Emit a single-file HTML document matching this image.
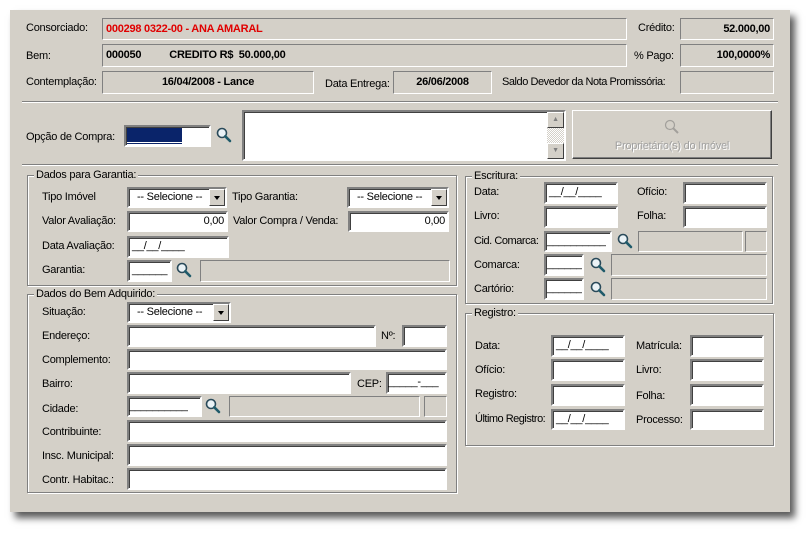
<!DOCTYPE html>
<html><head><meta charset="utf-8"><style>
*{box-sizing:border-box;margin:0;padding:0}
body{width:810px;height:534px;background:#fff;position:relative;overflow:hidden;font-family:"Liberation Sans",Arial,sans-serif;font-size:11px;color:#000;letter-spacing:-0.25px}
#p{position:absolute;left:10px;top:10px;width:780px;height:502px;background:#d4d0c8;box-shadow:5px 6px 7px rgba(0,0,0,.65)}
.a{position:absolute}
.l{position:absolute;white-space:nowrap;line-height:14px}
.ro{position:absolute;background:#d4d0c8;border:1px solid;border-color:#808080 #fff #fff #808080;font-weight:bold;line-height:19px;padding-top:1px;white-space:nowrap;overflow:hidden}
.in{position:absolute;background:#fff;border:2px solid;border-color:#808080 #fff #fff #808080;box-shadow:inset 1px 1px 0 #404040;line-height:17px;padding-left:3px;white-space:nowrap;overflow:hidden}
.sel{position:absolute;background:#fff;border:2px solid;border-color:#808080 #fff #fff #808080;box-shadow:inset 1px 1px 0 #404040;line-height:17px;padding-left:8px;white-space:nowrap}
.sel b{position:absolute;right:0;top:0;width:16px;height:17px;background:#d4d0c8;border:1px solid;border-color:#fff #404040 #404040 #fff;font-weight:normal}
.sel b:after{content:"";position:absolute;left:4px;top:6px;border:3px solid transparent;border-top:4px solid #000;border-bottom:0}
.g{position:absolute;border:1px solid #808080;box-shadow:1px 1px 0 #fff, inset 1px 1px 0 #fff}
.g span{position:absolute;left:6px;top:-8px;background:#d4d0c8;padding:0 2px;line-height:14px}
.hr{position:absolute;height:2px;border-top:1px solid #808080;border-bottom:1px solid #fff}
.m{position:absolute;width:16px;height:16px}
</style></head><body>
<div id="p"></div>
<svg width="0" height="0" style="position:absolute"><defs><g id="mg"><circle cx="6" cy="6" r="4.5" fill="#eaf2f6" stroke="#2a4a5a" stroke-width="1.6"/><path d="M9.3 9.3L14 14" stroke="#1f5a6a" stroke-width="2.6" stroke-linecap="round"/></g></defs></svg>

<div class="l" style="left:26px;top:21px">Consorciado:</div>
<div class="ro" style="left:102px;top:18px;width:525px;height:22px;color:#e00000;padding-left:3px">000298 0322-00 - ANA AMARAL</div>
<div class="l" style="left:638px;top:21px">Crédito:</div>
<div class="ro" style="left:680px;top:18px;width:94px;height:22px;text-align:right;padding-right:3px">52.000,00</div>

<div class="l" style="left:26px;top:49px">Bem:</div>
<div class="ro" style="left:102px;top:44px;width:525px;height:23px;padding-left:3px">000050 &nbsp;&nbsp;&nbsp;&nbsp;&nbsp;&nbsp;&nbsp;&nbsp;&nbsp;CREDITO R$&nbsp; 50.000,00</div>
<div class="l" style="left:634px;top:49px">% Pago:</div>
<div class="ro" style="left:680px;top:44px;width:94px;height:23px;text-align:right;padding-right:3px">100,0000%</div>

<div class="l" style="left:26px;top:75px">Contemplação:</div>
<div class="ro" style="left:102px;top:71px;width:212px;height:23px;text-align:center">16/04/2008 - Lance</div>
<div class="l" style="left:325px;top:77px">Data Entrega:</div>
<div class="ro" style="left:393px;top:71px;width:99px;height:23px;text-align:center">26/06/2008</div>
<div class="l" style="left:502px;top:75px;letter-spacing:-0.45px">Saldo Devedor da Nota Promissória:</div>
<div class="ro" style="left:680px;top:71px;width:94px;height:23px"></div>

<div class="hr" style="left:22px;top:101px;width:756px"></div>

<div class="l" style="left:26px;top:130px">Opção de Compra:</div>
<div class="in" style="left:124px;top:125px;width:87px;height:22px;padding:0"><div class="a" style="left:1px;top:1px;width:55px;height:15px;background:#0a246a;border-bottom:1px solid #fff;box-shadow:0 1px 0 #0a246a"></div></div>
<svg class="m" style="left:216px;top:127px"><use href="#mg"/></svg>
<div class="in" style="left:242px;top:110px;width:324px;height:51px"></div>
<div class="a" style="left:547px;top:112px;width:17px;height:47px;background:repeating-conic-gradient(#fff 0 25%,#d4d0c8 0 50%) 0 0/2px 2px"></div>
<div class="a" style="left:547px;top:112px;width:17px;height:16px;background:#d4d0c8;border:1px solid;border-color:#fff #404040 #404040 #fff;font-size:7px;text-align:center;line-height:13px;color:#808080">▲</div>
<div class="a" style="left:547px;top:143px;width:17px;height:16px;background:#d4d0c8;border:1px solid;border-color:#fff #404040 #404040 #fff;font-size:7px;text-align:center;line-height:13px;color:#808080">▼</div>
<div class="a" style="left:572px;top:110px;width:200px;height:49px;border:1px solid;border-color:#fff #404040 #404040 #fff;box-shadow:inset -1px -1px 0 #808080;text-align:center;color:#a0a0a0;text-shadow:1px 1px 0 #fff">
<svg width="16" height="16" style="margin-top:8px;opacity:.45"><circle cx="6" cy="6" r="4.5" fill="none" stroke="#666" stroke-width="1.2"/><path d="M9.3 9.3L14 14" stroke="#666" stroke-width="2"/></svg><div style="line-height:14px;margin-top:1px">Proprietário(s) do Imóvel</div></div>

<div class="hr" style="left:22px;top:164px;width:756px"></div>

<div class="g" style="left:27px;top:175px;width:430px;height:111px"><span>Dados para Garantia:</span></div>
<div class="l" style="left:42px;top:190px">Tipo Imóvel</div>
<div class="sel" style="left:127px;top:187px;width:100px;height:21px">-- Selecione --<b></b></div>
<div class="l" style="left:232px;top:190px">Tipo Garantia:</div>
<div class="sel" style="left:347px;top:187px;width:102px;height:21px">-- Selecione --<b></b></div>
<div class="l" style="left:42px;top:214px">Valor Avaliação:</div>
<div class="in" style="left:127px;top:211px;width:101px;height:21px;text-align:right;padding-right:2px">0,00</div>
<div class="l" style="left:233px;top:214px">Valor Compra / Venda:</div>
<div class="in" style="left:348px;top:211px;width:101px;height:21px;text-align:right;padding-right:2px">0,00</div>
<div class="l" style="left:42px;top:239px">Data Avaliação:</div>
<div class="in" style="left:127px;top:236px;width:102px;height:22px">__/__/____</div>
<div class="l" style="left:42px;top:263px">Garantia:</div>
<div class="in" style="left:127px;top:260px;width:45px;height:22px">______</div>
<svg class="m" style="left:176px;top:262px"><use href="#mg"/></svg>
<div class="ro" style="left:200px;top:260px;width:250px;height:22px"></div>

<div class="g" style="left:27px;top:294px;width:430px;height:199px"><span>Dados do Bem Adquirido:</span></div>
<div class="l" style="left:42px;top:305px">Situação:</div>
<div class="sel" style="left:127px;top:302px;width:104px;height:21px">-- Selecione --<b></b></div>
<div class="l" style="left:42px;top:329px">Endereço:</div>
<div class="in" style="left:127px;top:325px;width:249px;height:22px"></div>
<div class="l" style="left:381px;top:329px">Nº:</div>
<div class="in" style="left:402px;top:325px;width:45px;height:22px"></div>
<div class="l" style="left:42px;top:353px">Complemento:</div>
<div class="in" style="left:127px;top:349px;width:320px;height:21px"></div>
<div class="l" style="left:42px;top:377px">Bairro:</div>
<div class="in" style="left:127px;top:372px;width:224px;height:22px"></div>
<div class="l" style="left:357px;top:377px">CEP:</div>
<div class="in" style="left:386px;top:372px;width:61px;height:22px;padding-left:0">_____-___</div>
<div class="l" style="left:42px;top:402px">Cidade:</div>
<div class="in" style="left:127px;top:396px;width:75px;height:21px;padding-left:0">__________</div>
<svg class="m" style="left:205px;top:398px"><use href="#mg"/></svg>
<div class="ro" style="left:229px;top:396px;width:191px;height:21px"></div>
<div class="ro" style="left:424px;top:396px;width:23px;height:21px"></div>
<div class="l" style="left:42px;top:425px">Contribuinte:</div>
<div class="in" style="left:127px;top:420px;width:320px;height:22px"></div>
<div class="l" style="left:42px;top:449px">Insc. Municipal:</div>
<div class="in" style="left:127px;top:444px;width:320px;height:22px"></div>
<div class="l" style="left:42px;top:473px">Contr. Habitac.:</div>
<div class="in" style="left:127px;top:468px;width:320px;height:22px"></div>

<div class="g" style="left:465px;top:176px;width:308px;height:128px"><span>Escritura:</span></div>
<div class="l" style="left:474px;top:185px">Data:</div>
<div class="in" style="left:544px;top:182px;width:74px;height:22px">__/__/____</div>
<div class="l" style="left:637px;top:185px">Ofício:</div>
<div class="in" style="left:683px;top:182px;width:84px;height:22px"></div>
<div class="l" style="left:474px;top:209px">Livro:</div>
<div class="in" style="left:544px;top:206px;width:74px;height:22px"></div>
<div class="l" style="left:637px;top:209px">Folha:</div>
<div class="in" style="left:683px;top:206px;width:84px;height:22px"></div>
<div class="l" style="left:474px;top:234px;letter-spacing:-0.45px">Cid. Comarca:</div>
<div class="in" style="left:544px;top:231px;width:68px;height:21px;padding-left:1px">__________</div>
<svg class="m" style="left:617px;top:233px"><use href="#mg"/></svg>
<div class="ro" style="left:638px;top:231px;width:105px;height:21px"></div>
<div class="ro" style="left:745px;top:231px;width:22px;height:21px"></div>
<div class="l" style="left:474px;top:258px">Comarca:</div>
<div class="in" style="left:544px;top:254px;width:40px;height:22px;padding-left:1px">______</div>
<svg class="m" style="left:590px;top:257px"><use href="#mg"/></svg>
<div class="ro" style="left:611px;top:254px;width:156px;height:22px"></div>
<div class="l" style="left:474px;top:282px">Cartório:</div>
<div class="in" style="left:544px;top:278px;width:40px;height:22px;padding-left:1px">______</div>
<svg class="m" style="left:590px;top:281px"><use href="#mg"/></svg>
<div class="ro" style="left:611px;top:278px;width:156px;height:22px"></div>

<div class="g" style="left:465px;top:313px;width:309px;height:133px"><span>Registro:</span></div>
<div class="l" style="left:475px;top:339px">Data:</div>
<div class="in" style="left:551px;top:335px;width:74px;height:22px">__/__/____</div>
<div class="l" style="left:636px;top:339px">Matrícula:</div>
<div class="in" style="left:690px;top:335px;width:74px;height:22px"></div>
<div class="l" style="left:475px;top:363px">Ofício:</div>
<div class="in" style="left:551px;top:359px;width:74px;height:22px"></div>
<div class="l" style="left:636px;top:363px">Livro:</div>
<div class="in" style="left:690px;top:359px;width:74px;height:22px"></div>
<div class="l" style="left:475px;top:387px">Registro:</div>
<div class="in" style="left:551px;top:384px;width:74px;height:22px"></div>
<div class="l" style="left:636px;top:389px">Folha:</div>
<div class="in" style="left:690px;top:384px;width:74px;height:22px"></div>
<div class="l" style="left:475px;top:412px;letter-spacing:-0.5px">Último Registro:</div>
<div class="in" style="left:551px;top:409px;width:74px;height:21px">__/__/____</div>
<div class="l" style="left:636px;top:413px">Processo:</div>
<div class="in" style="left:690px;top:409px;width:74px;height:21px"></div>
</body></html>
